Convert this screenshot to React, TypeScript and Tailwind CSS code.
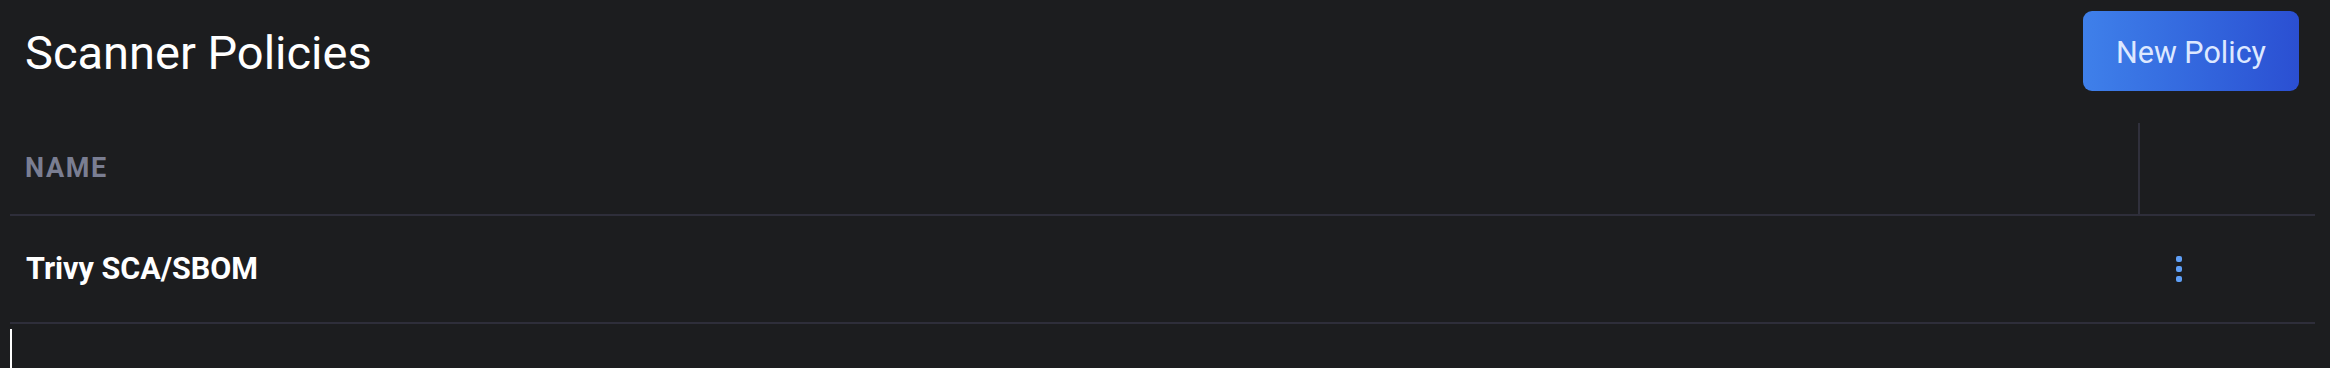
import React from "react";

function Kebab() {
  return (
    <button type="button" className="flex flex-col items-center gap-[4px] p-0 bg-transparent">
      <span className="block w-[6px] h-[6px] rounded-[2px] bg-[#5f9ff6]" />
      <span className="block w-[6px] h-[6px] rounded-[2px] bg-[#5f9ff6]" />
      <span className="block w-[6px] h-[6px] rounded-[2px] bg-[#5f9ff6]" />
    </button>
  );
}

export default function App() {
  return (
    <div
      className="w-[2330px] h-[368px] overflow-hidden bg-[#1c1d1f] pl-[10px] pr-[15px] text-white"
      style={{ fontFamily: "Roboto, 'Liberation Sans', sans-serif" }}
    >
      <div className="flex items-center justify-between pl-[15px] pr-[16px] pt-[11px]">
        <h1 className="text-[47px] leading-[56px] font-normal pt-[3px] text-white">Scanner Policies</h1>
        <button
          type="button"
          className="h-[80px] w-[216px] rounded-[9px] bg-gradient-to-r from-[#3f80ea] to-[#2b4fd2] text-[#dde8ff] text-[30.5px] leading-[36px] pt-[3px]"
        >
          New Policy
        </button>
      </div>

      <div className="mt-[32px]">
        <div className="grid grid-cols-[1fr_177px] h-[93px] border-b-2 border-[#2e2e3a]">
          <div className="flex items-center pl-[15px] text-[27px] font-bold tracking-[0.06em] text-[#7a7e92]">
            NAME
          </div>
          <div className="border-l-2 border-[#30303c]" />
        </div>
        <div className="grid grid-cols-[1fr_177px] h-[108px] border-b-2 border-[#2e2e3a]">
          <div className="flex items-center pl-[16px] text-[30.5px] font-bold text-white">
            Trivy SCA/SBOM
          </div>
          <div className="flex items-center pl-[38px]">
            <Kebab />
          </div>
        </div>
        <div className="mt-[5px] w-[2px] h-[60px] bg-white" />
      </div>
    </div>
  );
}
